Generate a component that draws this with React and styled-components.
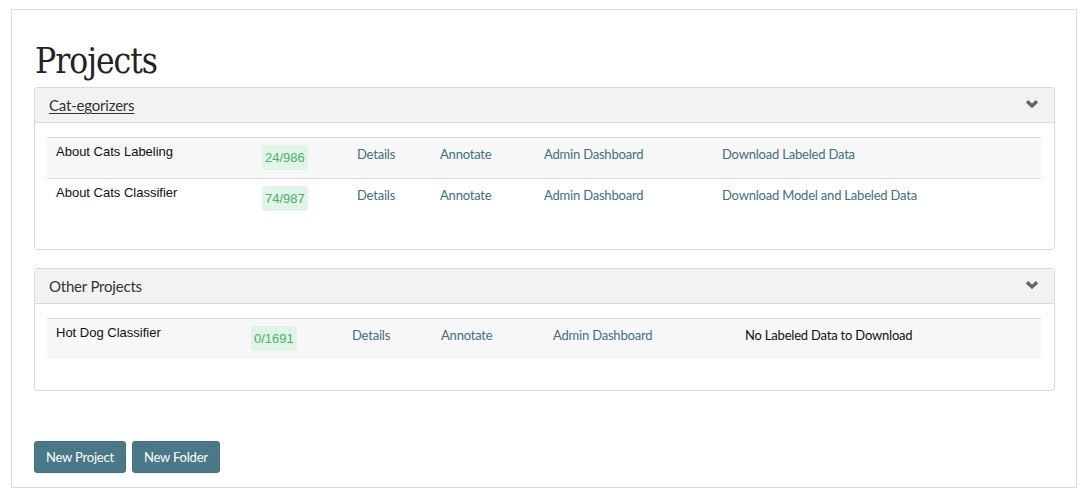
import React from "react";
import styled, { createGlobalStyle } from "styled-components";

const Global = createGlobalStyle`
  html, body { margin: 0; padding: 0; background: #fff; }
  body { font-family: Lato, "Liberation Sans", sans-serif; color: #333; letter-spacing: -0.2px; }
`;

const Page = styled.div`
  box-sizing: border-box;
  margin: 9px 0 0 11px;
  width: 1066px;
  height: 479px;
  border: 1px solid #dcdcdc;
  padding: 28px 21px 0 22px;
  display: flex;
  flex-direction: column;
`;

const Title = styled.h1`
  margin: 0 0 3px 1px;
  font-family: "DejaVu Serif", "Liberation Serif", serif;
  font-stretch: condensed;
  font-weight: 400;
  font-size: 35px;
  line-height: 46px;
  color: #222;
  letter-spacing: -1px;
`;

const Panel = styled.section`
  border: 1px solid #dadada;
  border-radius: 3px;
  margin-bottom: 18px;
  background: #fff;
`;

const PanelHeader = styled.div`
  height: 34px;
  background: #f2f2f2;
  border-bottom: 1px solid #dadada;
  display: flex;
  align-items: center;
  justify-content: space-between;
  padding: 0 14px 0 14px;
  font-size: 15px;
  color: #333;
`;

const HeaderTitle = styled.span`
  text-decoration: ${(p) => (p.$link ? "underline" : "none")};
  text-underline-offset: 2px;
`;

const Chevron = styled.svg`
  width: 14px;
  height: 10px;
  margin-top: -2px;
  margin-right: 1px;
`;

const PanelBody = styled.div`
  padding: 14px 13px 31px 12px;
`;

const Table = styled.div`
  border-top: 1px solid #dddddd;
`;

const Row = styled.div`
  display: grid;
  grid-template-columns: ${(p) => p.$cols};
  height: 40px;
  box-sizing: border-box;
  border-top: ${(p) => (p.$first ? "none" : "1px solid #dddddd")};
  background: ${(p) => (p.$striped ? "#f7f7f7" : "#fff")};
  align-items: start;
`;

const NameCell = styled.div`
  padding: 5px 8px 0 9px;
  font-family: "Liberation Sans", Arial, sans-serif;
  font-size: 13px;
  line-height: 18px;
  letter-spacing: 0;
  color: #111;
`;

const Cell = styled.div`
  padding: 7px 8px 0 8px;
  font-size: 13px;
  line-height: 18px;
  white-space: nowrap;
`;

const BadgeCell = styled.div`
  padding: 7px 8px 0 8px;
`;

const Badge = styled.span`
  display: inline-block;
  font-family: "Liberation Sans", Arial, sans-serif;
  font-size: 13px;
  line-height: 17px;
  letter-spacing: 0;
  padding: 4px 3px 4px 3px;
  border-radius: 3px;
  background: #e0f4e7;
  color: #4caf6a;
`;

const Link = styled.a`
  color: #41707f;
  text-decoration: none;
  cursor: pointer;
`;

const Plain = styled.span`
  color: #111;
`;

const Actions = styled.div`
  display: flex;
  gap: 6px;
  margin-top: 32px;
`;

const Button = styled.button`
  height: 32px;
  padding: 0 11px;
  border: 1px solid #41707f;
  border-radius: 3px;
  background: #4a7888;
  color: #fff;
  font-family: Lato, "Liberation Sans", sans-serif;
  font-size: 13px;
  letter-spacing: -0.2px;
  cursor: pointer;
`;

const ChevronDown = () => (
  <Chevron viewBox="0 0 14 10">
    <polyline points="2,2.2 7,7 12,2.2" fill="none" stroke="#666" strokeWidth="3.4" strokeLinejoin="miter" />
  </Chevron>
);

const groups = [
  {
    title: "Cat-egorizers",
    link: true,
    cols: "207px 95px 83px 104px 178px 1fr",
    projects: [
      { name: "About Cats Labeling", progress: "24/986", download: "Download Labeled Data" },
      { name: "About Cats Classifier", progress: "74/987", download: "Download Model and Labeled Data" },
    ],
  },
  {
    title: "Other Projects",
    link: false,
    cols: "196px 101px 89px 112px 192px 1fr",
    projects: [
      { name: "Hot Dog Classifier", progress: "0/1691", download: null },
    ],
  },
];

export default function App() {
  return (
    <>
      <Global />
      <Page>
        <Title>Projects</Title>
        {groups.map((g) => (
          <Panel key={g.title}>
            <PanelHeader>
              <HeaderTitle $link={g.link}>{g.title}</HeaderTitle>
              <ChevronDown />
            </PanelHeader>
            <PanelBody>
              <Table>
                {g.projects.map((p, i) => (
                  <Row key={p.name} $cols={g.cols} $first={i === 0} $striped={i % 2 === 0}>
                    <NameCell>{p.name}</NameCell>
                    <BadgeCell>
                      <Badge>{p.progress}</Badge>
                    </BadgeCell>
                    <Cell><Link>Details</Link></Cell>
                    <Cell><Link>Annotate</Link></Cell>
                    <Cell><Link>Admin Dashboard</Link></Cell>
                    <Cell>
                      {p.download ? <Link>{p.download}</Link> : <Plain>No Labeled Data to Download</Plain>}
                    </Cell>
                  </Row>
                ))}
              </Table>
            </PanelBody>
          </Panel>
        ))}
        <Actions>
          <Button>New Project</Button>
          <Button>New Folder</Button>
        </Actions>
      </Page>
    </>
  );
}
